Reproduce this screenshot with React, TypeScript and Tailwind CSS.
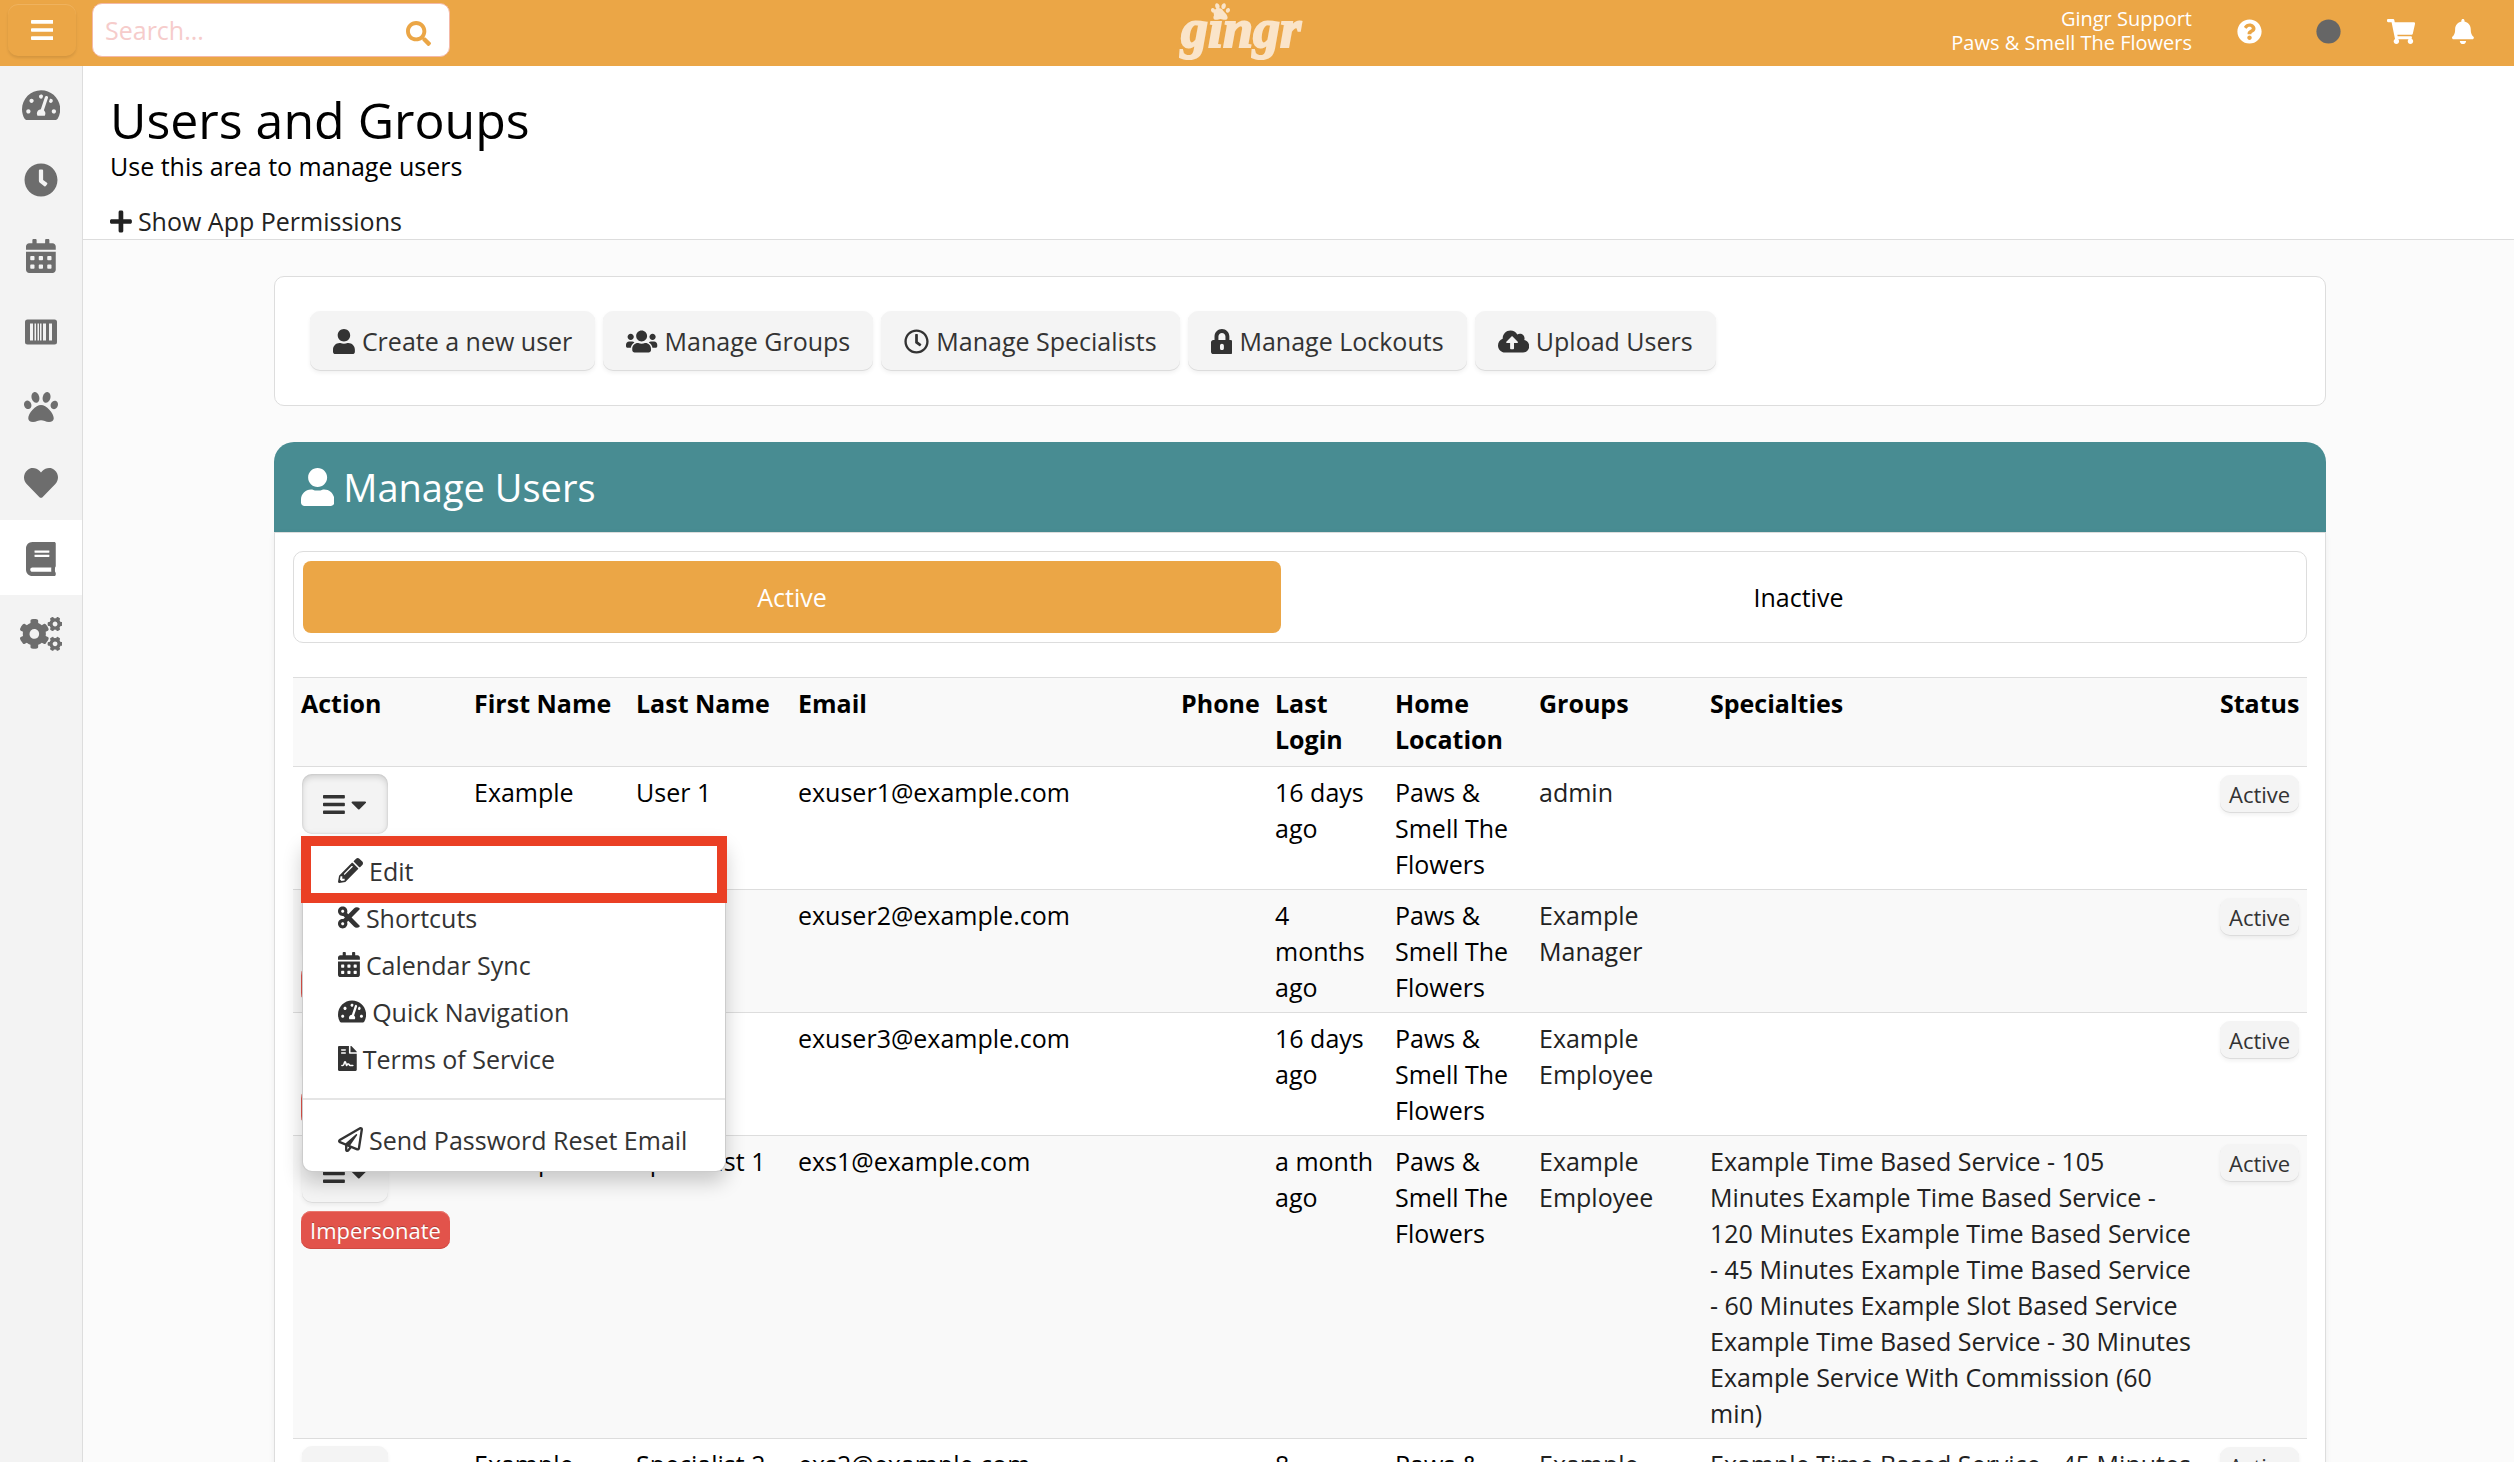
import clsx from 'clsx';
import type { ReactNode } from 'react';
import {
	FaBars,
	FaBell,
	FaBook,
	FaCalendarAlt,
	FaCaretDown,
	FaCircle,
	FaClock,
	FaCloudUploadAlt,
	FaCogs,
	FaCut,
	FaFileContract,
	FaHeart,
	FaPaw,
	FaPencilAlt,
	FaPlus,
	FaQuestionCircle,
	FaRegClock,
	FaRegPaperPlane,
	FaSearch,
	FaShoppingCart,
	FaTachometerAlt,
	FaUser,
	FaUsers,
} from 'react-icons/fa';

interface IconProps {
	className?: string;
}

function LockIcon({ className }: IconProps) {
	return (
		<svg viewBox="0 0 448 512" fill="currentColor" fillRule="evenodd" className={className}>
			<path d="M400 224h-24v-72C376 68.2 307.8 0 224 0S72 68.2 72 152v72H48c-26.5 0-48 21.5-48 48v192c0 26.5 21.5 48 48 48h352c26.5 0 48-21.5 48-48V272c0-26.5-21.5-48-48-48zM264 392c0 22.1-17.9 40-40 40s-40-17.9-40-40v-48c0-22.1 17.9-40 40-40s40 17.9 40 40v48zm32-168H152v-72c0-39.7 32.3-72 72-72s72 32.3 72 72v72z" />
		</svg>
	);
}

function BarcodeIcon({ className }: IconProps) {
	return (
		<svg viewBox="0 0 32 34" fill="currentColor" fillRule="evenodd" className={className}>
			<path d="M2.5 4.5h27A2.5 2.5 0 0 1 32 7v20a2.5 2.5 0 0 1-2.5 2.5h-27A2.5 2.5 0 0 1 0 27V7a2.5 2.5 0 0 1 2.5-2.5zM5 8.500v17h3v-17zM9.500 8.500v17h1.500v-17zM12.500 8.500v17h1.500v-17zM15 8.500v17h1.500v-17zM18 8.500v17h3v-17zM24 8.500v17h3v-17z" />
		</svg>
	);
}

// react-icons renders every glyph in a square box, so the wide and narrow ones carry their own ratio
const navItems = [
	{ label: 'Dashboard', Icon: FaTachometerAlt, ratio: 'aspect-[9/8]' },
	{ label: 'Time clock', Icon: FaClock, ratio: 'aspect-square' },
	{ label: 'Calendar', Icon: FaCalendarAlt, ratio: 'aspect-[7/8]' },
	{ label: 'Point of sale', Icon: BarcodeIcon, ratio: 'aspect-[16/17]' },
	{ label: 'Animals', Icon: FaPaw, ratio: 'aspect-square' },
	{ label: 'Favorites', Icon: FaHeart, ratio: 'aspect-square' },
	{ label: 'Directory', Icon: FaBook, ratio: 'aspect-[7/8]', active: true },
	{ label: 'Settings', Icon: FaCogs, ratio: 'aspect-[5/4]' },
];

const toolbar = [
	{ label: 'Create a new user', Icon: FaUser, ratio: 'aspect-[7/8]' },
	{ label: 'Manage Groups', Icon: FaUsers, ratio: 'aspect-[5/4]' },
	{ label: 'Manage Specialists', Icon: FaRegClock, ratio: 'aspect-square' },
	{ label: 'Manage Lockouts', Icon: LockIcon, ratio: 'aspect-[7/8]' },
	{ label: 'Upload Users', Icon: FaCloudUploadAlt, ratio: 'aspect-[5/4]' },
];

const menuItems = [
	{ label: 'Edit', Icon: FaPencilAlt, ratio: 'aspect-square' },
	{ label: 'Shortcuts', Icon: FaCut, ratio: 'aspect-[7/8]' },
	{ label: 'Calendar Sync', Icon: FaCalendarAlt, ratio: 'aspect-[7/8]' },
	{ label: 'Quick Navigation', Icon: FaTachometerAlt, ratio: 'aspect-[9/8]' },
	{ label: 'Terms of Service', Icon: FaFileContract, ratio: 'aspect-[3/4]' },
];

const columns = [
	{ label: 'Action', width: 'w-[173px]' },
	{ label: 'First Name', width: 'w-[162px]' },
	{ label: 'Last Name', width: 'w-[162px]' },
	{ label: 'Email', width: 'w-[383px]' },
	{ label: 'Phone', width: 'w-[94px]' },
	{ label: 'Last Login', width: 'w-[120px]' },
	{ label: 'Home Location', width: 'w-[144px]' },
	{ label: 'Groups', width: 'w-[171px]' },
	{ label: 'Specialties', width: '' },
	{ label: 'Status', width: 'w-[95px]' },
];

interface User {
	first: string;
	last: string;
	email: string;
	lastLogin: string;
	group: string;
	specialties?: string;
}

const users: User[] = [
	{
		first: 'Example',
		last: 'User 1',
		email: 'exuser1@example.com',
		lastLogin: '16 days ago',
		group: 'admin',
	},
	{
		first: 'Example',
		last: 'User 2',
		email: 'exuser2@example.com',
		lastLogin: '4 months ago',
		group: 'Example Manager',
	},
	{
		first: 'Example',
		last: 'User 3',
		email: 'exuser3@example.com',
		lastLogin: '16 days ago',
		group: 'Example Employee',
	},
	{
		first: 'Example',
		last: 'Specialist 1',
		email: 'exs1@example.com',
		lastLogin: 'a month ago',
		group: 'Example Employee',
		specialties:
			'Example Time Based Service - 105 Minutes Example Time Based Service - 120 Minutes Example Time Based Service - 45 Minutes Example Time Based Service - 60 Minutes Example Slot Based Service Example Time Based Service - 30 Minutes Example Service With Commission (60 min)',
	},
	{
		first: 'Example',
		last: 'Specialist 2',
		email: 'exs2@example.com',
		lastLogin: '8 months ago',
		group: 'Example Employee',
		specialties: 'Example Time Based Service - 45 Minutes',
	},
];

const raised =
	'bg-[#f4f4f4] text-[#333] shadow-[inset_0_-1px_0_#dcdcdc,0_2px_4px_rgba(0,0,0,0.06)]';

function TopBar() {
	return (
		<header className="flex h-[66px] shrink-0 items-center bg-[#eba646] text-white">
			<div className="flex flex-1 items-center gap-4 pb-1.5 pl-2">
				<button
					type="button"
					aria-label="Toggle menu"
					className="flex h-[52px] w-[68px] items-center justify-center rounded-[10px] shadow-[inset_0_1px_0_#efb25e,0_2px_3px_rgba(0,0,0,0.1)]"
				>
					<FaBars className="aspect-[7/8] h-[26px] w-auto" />
				</button>
				<div className="flex h-[54px] w-[358px] items-center rounded-[10px] border border-[#f4b9a8] bg-white pr-[18px] pl-3">
					<input
						type="text"
						aria-label="Search"
						placeholder="Search..."
						className="min-w-0 flex-1 outline-none placeholder:text-[#f6cccb]"
					/>
					<button type="button" aria-label="Search" className="pt-1.5 text-[#eba646]">
						<FaSearch className="h-[25px] w-auto" />
					</button>
				</div>
			</div>
			<a
				href="#home"
				className="relative block px-1 pb-2 font-['Liberation_Serif',serif] text-[54px] leading-[54px] font-bold text-[#fae4c9] italic [-webkit-text-stroke:2px_#fae4c9]"
			>
				gingr
				<FaPaw className="absolute top-0 left-[34px] h-[19px] w-auto" />
			</a>
			<div className="flex flex-1 items-center justify-end pr-10 pb-1">
				<div className="mr-[45px] text-right text-[20px] leading-[24px]">
					<div>Gingr Support</div>
					<div>Paws &amp; Smell The Flowers</div>
				</div>
				<button type="button" aria-label="Help" className="mr-[54px]">
					<FaQuestionCircle className="h-[25px] w-auto" />
				</button>
				<button type="button" aria-label="Status" className="mr-[46px] text-[#666]">
					<FaCircle className="h-[25px] w-auto" />
				</button>
				<button type="button" aria-label="Cart" className="mr-[37px]">
					<FaShoppingCart className="aspect-[9/8] h-[25px] w-auto" />
				</button>
				<button type="button" aria-label="Notifications">
					<FaBell className="aspect-[7/8] h-[25px] w-auto" />
				</button>
			</div>
		</header>
	);
}

function SideNav() {
	return (
		<nav className="w-[83px] shrink-0 border-r border-[#ddd] bg-[#f3f3f3]">
			<ul className="grid h-[605px] grid-rows-8">
				{navItems.map(({ label, Icon, ratio, active }) => (
					<li key={label}>
						<a
							href="#nav"
							aria-label={label}
							className={clsx(
								'flex h-full items-center justify-center pt-0.5 text-[#6d6d6d]',
								active && 'bg-white',
							)}
						>
							<Icon className={clsx('h-[34px] w-auto', ratio)} />
						</a>
					</li>
				))}
			</ul>
		</nav>
	);
}

function MenuLink({ icon, children }: { icon: ReactNode; children: ReactNode }) {
	return (
		<a href="#menu" className="flex h-[47px] items-center gap-1.5 pl-[35px] whitespace-nowrap">
			{icon}
			{children}
		</a>
	);
}

function ActionMenu() {
	return (
		<div className="absolute top-[63px] left-0 z-10 w-[424px] rounded-[10px] border border-black/20 bg-white pt-[9px] pb-2 text-[#333] shadow-[0_10px_20px_rgba(0,0,0,0.2)]">
			{menuItems.map(({ label, Icon, ratio }) => (
				<MenuLink key={label} icon={<Icon className={clsx('h-[25px] w-auto', ratio)} />}>
					{label}
				</MenuLink>
			))}
			<hr className="my-4 border-t-2 border-[#e5e5e5]" />
			<MenuLink icon={<FaRegPaperPlane className="h-[25px] w-auto" />}>
				Send Password Reset Email
			</MenuLink>
			<div className="pointer-events-none absolute -inset-x-0.5 -top-0.5 h-[67px] border-10 border-[#ea3f24]" />
		</div>
	);
}

function ActionCell({ open, impersonate }: { open: boolean; impersonate: boolean }) {
	return (
		<div className="flex flex-col items-start gap-2">
			<div className="relative ml-px">
				<button
					type="button"
					aria-label="Row actions"
					aria-expanded={open}
					className={clsx(
						'flex h-[60px] items-center gap-1.5 rounded-[10px] px-[21px]',
						open
							? 'bg-[#f3f3f3] text-[#333] shadow-[inset_0_3px_6px_rgba(0,0,0,0.15),inset_0_0_2px_rgba(0,0,0,0.15)]'
							: raised,
					)}
				>
					<FaBars className="aspect-[7/8] h-[25px] w-auto" />
					<FaCaretDown className="aspect-[5/8] h-[25px] w-auto" />
				</button>
				{open && <ActionMenu />}
			</div>
			{impersonate && (
				<button
					type="button"
					className="h-[38px] rounded-[10px] bg-[#e2534b] px-[9px] text-[22px] leading-[36px] text-white shadow-[inset_0_1px_0_#e9776f,inset_0_-1px_0_#cf4a43] text-shadow-[0_-1px_0_rgba(0,0,0,0.25)]"
				>
					Impersonate
				</button>
			)}
		</div>
	);
}

function UsersTable() {
	return (
		<table className="mt-[34px] w-full table-fixed text-left">
			<thead>
				<tr className="border-t border-[#ddd] bg-[#f9f9f9]">
					{columns.map(({ label, width }) => (
						<th key={label} className={clsx('px-2 pt-[7px] pb-[9px] align-top font-bold', width)}>
							{label}
						</th>
					))}
				</tr>
			</thead>
			<tbody className="[&_td]:px-2 [&_td]:py-[7px] [&_td]:align-top">
				{users.map((user, index) => (
					<tr key={user.email} className="border-t border-[#ddd] even:bg-[#f9f9f9]">
						<td>
							<ActionCell open={index === 0} impersonate={index > 0} />
						</td>
						<td>{user.first}</td>
						<td className="whitespace-nowrap">{user.last}</td>
						<td>{user.email}</td>
						<td />
						<td>{user.lastLogin}</td>
						<td>Paws &amp; Smell The Flowers</td>
						<td className="text-[#222]">{user.group}</td>
						<td className="text-[#222]">{user.specialties}</td>
						<td>
							<button
								type="button"
								className={clsx(
									'mt-px block h-[38px] rounded-[10px] px-[9px] text-[22px] leading-[38px]',
									raised,
								)}
							>
								Active
							</button>
						</td>
					</tr>
				))}
			</tbody>
		</table>
	);
}

export default function App() {
	return (
		<div className="flex h-screen flex-col overflow-hidden bg-[#fbfbfb] font-['Open_Sans',sans-serif] text-[25px] leading-[36px] text-black">
			<TopBar />
			<div className="flex min-h-0 flex-1">
				<SideNav />
				<main className="min-w-0 flex-1">
					<div className="border-b border-[#ddd] bg-white px-[27px] pt-7">
						<h1 className="text-[50px] leading-[52px]">Users and Groups</h1>
						<p className="mt-0.5">Use this area to manage users</p>
						<a href="#permissions" className="mt-[19px] flex items-center gap-1.5 text-[#222]">
							<FaPlus className="aspect-[7/8] h-[25px] w-auto" />
							Show App Permissions
						</a>
					</div>
					<div className="flex flex-col gap-9 pt-9 pr-[188px] pl-[191px]">
						<section className="flex gap-2 rounded-[10px] border border-[#ddd] bg-white px-[35px] py-[34px]">
							{toolbar.map(({ label, Icon, ratio }) => (
								<button
									key={label}
									type="button"
									className={clsx(
										'flex h-[60px] items-center gap-[7px] rounded-[10px] px-[23px]',
										raised,
									)}
								>
									<Icon className={clsx('h-[25px] w-auto', ratio)} />
									{label}
								</button>
							))}
						</section>
						<section>
							<h2 className="flex h-[90px] items-center gap-[9px] rounded-t-[20px] bg-[#488c92] px-[27px] text-[38px] text-white">
								<FaUser className="aspect-[7/8] h-[38px] w-auto" />
								Manage Users
							</h2>
							<div className="border border-[#ddd] bg-white p-[18px] shadow-[0_2px_6px_rgba(0,0,0,0.06)]">
								<div role="tablist" className="flex rounded-[10px] border border-[#ddd] p-[9px]">
									<div className="w-1/2 pr-[19px]">
										<button
											type="button"
											role="tab"
											aria-selected="true"
											className="h-[72px] w-full rounded-[8px] bg-[#eba646] text-white"
										>
											Active
										</button>
									</div>
									<div className="w-1/2">
										<button
											type="button"
											role="tab"
											aria-selected="false"
											className="h-[72px] w-full"
										>
											Inactive
										</button>
									</div>
								</div>
								<UsersTable />
							</div>
						</section>
					</div>
				</main>
			</div>
		</div>
	);
}
